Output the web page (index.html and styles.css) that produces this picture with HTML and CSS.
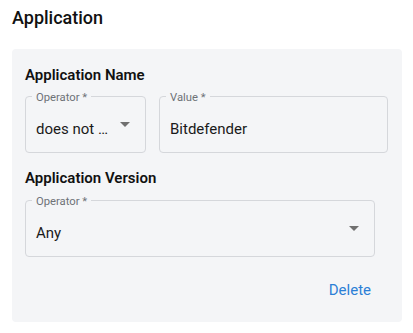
FILE: index.html
```html
<!DOCTYPE html>
<html>
  <head>
    <meta charset='utf-8'/>
    <link rel="stylesheet" href="styles.css">
  </head>
  <body>
    <div class='page'>
      <h1>Application</h1>

      <div class='card'>
        <h2>Application Name</h2>
        <div class='row'>
          <div class='field'>
            <span class='label'>Operator *</span>
            <span class='value'>does not …</span>
            <svg class='arrow' width='10' height='5' viewBox='7 10 10 5'><path d='M7 10l5 5 5-5z'/></svg>
          </div>
          <div class='field'>
            <span class='label'>Value *</span>
            <span class='value'>Bitdefender</span>
          </div>
        </div>

        <h2 class='second'>Application Version</h2>
        <div class='field wide'>
          <span class='label'>Operator *</span>
          <span class='value'>Any</span>
          <svg class='arrow' width='10' height='5' viewBox='7 10 10 5'><path d='M7 10l5 5 5-5z'/></svg>
        </div>

        <div class='actions'>
          <button class='delete'>Delete</button>
        </div>
      </div>
    </div>
  </body>
</html>
```

FILE: styles.css
```css
* {
  font-family: 'Roboto', sans-serif;
  box-sizing: border-box;
}

body {
  margin: 0;
  background: #fff;
  color: #1c1c1e;
}

.page {
  padding: 6px 11px 0 12px;
}

h1 {
  font-size: 18px;
  font-weight: 500;
  line-height: 24px;
  margin: 0 0 19px;
  color: #111;
}

.card {
  background: #f4f5f7;
  border-radius: 4px;
  padding: 16px 14px 22px 13px;
}

h2 {
  font-size: 15px;
  font-weight: 600;
  line-height: 20px;
  margin: 0 0 11px;
  color: #111;
}

h2.second {
  margin-top: 15px;
  margin-bottom: 12px;
}

.row {
  display: grid;
  grid-template-columns: 121px 1fr;
  gap: 13px;
}

.field {
  position: relative;
  display: flex;
  align-items: flex-start;
  gap: 11px;
  height: 57px;
  padding: 22px 15px 13px 10px;
  border: 1px solid #d5d7db;
  border-radius: 4px;
}

.field.wide {
  margin-right: 13px;
}

.label {
  position: absolute;
  top: -5px;
  left: 6px;
  padding: 0 4px;
  background: #f4f5f7;
  font-size: 11.25px;
  line-height: 12px;
  color: #6e7277;
}

.value {
  flex: 1;
  min-width: 0;
  font-size: 15px;
  line-height: 20px;
  color: #1a1a1a;
  white-space: nowrap;
}

.arrow {
  flex: none;
  margin-top: 3px;
  fill: #707070;
}

.actions {
  display: flex;
  justify-content: flex-end;
  margin-top: 23px;
  padding-right: 17px;
}

.delete {
  border: none;
  background: none;
  padding: 0;
  font-size: 15px;
  font-weight: 400;
  line-height: 20px;
  color: #2b7fd6;
  cursor: pointer;
}
```
